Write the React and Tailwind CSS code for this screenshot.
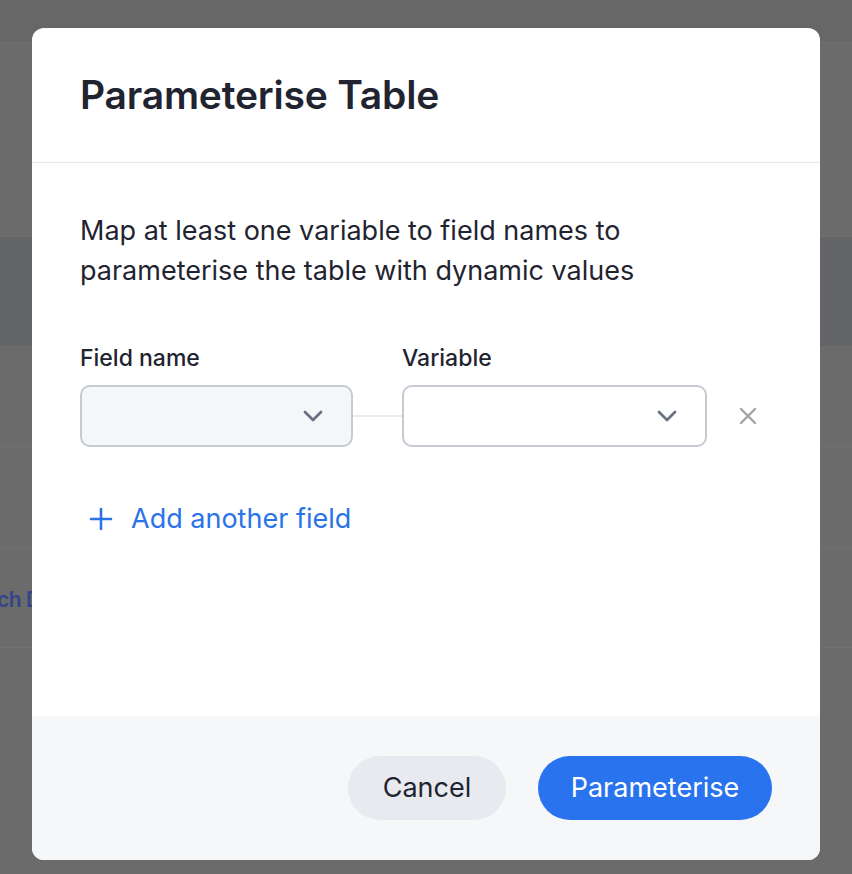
import React from "react";

function Chevron() {
  return (
    <svg width="20" height="12" viewBox="0 0 20 12" fill="none">
      <path d="M2 2l8 8 8-8" stroke="#6b7280" strokeWidth="2.8" strokeLinecap="round" strokeLinejoin="round" />
    </svg>
  );
}

function CloseIcon() {
  return (
    <svg width="18" height="18" viewBox="0 0 18 18" fill="none">
      <path d="M2 2l14 14M16 2L2 16" stroke="#a0a3a8" strokeWidth="2.4" strokeLinecap="round" />
    </svg>
  );
}

function PlusIcon() {
  return (
    <svg width="24" height="24" viewBox="0 0 24 24" fill="none">
      <path d="M12 2v20M2 12h20" stroke="#2a73e8" strokeWidth="2.6" strokeLinecap="round" />
    </svg>
  );
}

export default function App() {
  return (
    <div
      className="relative w-[852px] h-[874px] overflow-hidden bg-[#6b6b6b]"
      style={{ fontFamily: "Inter, 'Noto Sans', sans-serif" }}
    >
      {/* page underneath the overlay */}
      <div className="flex flex-col">
        <div className="h-[43px] bg-[#676768] border-b border-[#717171]" />
        <div className="h-[193px]" />
        <div className="h-[111px] bg-[#646569] border-y border-[#6e6e6f]" />
        <div className="h-[100px] border-b border-[#717171]" />
        <div className="h-[101px] border-b border-[#717171]" />
        <div className="h-[100px] border-b border-[#717171] flex items-center pt-[4px]">
          <span className="ml-[-3px] text-[21px] font-semibold tracking-[-0.5px] text-[#33448a] whitespace-nowrap">
            ch Dashboards
          </span>
        </div>
      </div>

      {/* modal */}
      <div className="absolute inset-0 pl-[32px] pt-[28px]">
        <div className="w-[788px] h-[832px] bg-white rounded-xl overflow-hidden flex flex-col text-[#1f2430]">
          <div className="h-[135px] shrink-0 border-b border-[#e5e8ec] px-12 flex items-center">
            <h2 className="text-[39px] font-semibold tracking-[-0.2px]">Parameterise Table</h2>
          </div>

          <div className="flex-1 px-12 pt-[48px]">
            <p className="text-[27px] leading-[40px] w-[620px]">
              Map at least one variable to field names to parameterise the table with dynamic values
            </p>

            <div className="mt-[53px] flex items-end">
              <div className="flex flex-col w-[273px]">
                <label className="text-[23px] font-medium leading-[28px] mb-[13px]">Field name</label>
                <div className="h-[62px] rounded-[10px] border-2 border-[#c6cad2] bg-[#f5f6f8] flex items-center justify-end pr-[28px]">
                  <Chevron />
                </div>
              </div>
              <div className="w-[49px] h-[62px] flex items-center">
                <div className="w-full h-[2px] bg-[#e8eaee]" />
              </div>
              <div className="flex flex-col w-[305px]">
                <label className="text-[23px] font-medium leading-[28px] mb-[13px]">Variable</label>
                <div className="h-[62px] rounded-[10px] border-2 border-[#c6cad2] bg-white flex items-center justify-end pr-[28px]">
                  <Chevron />
                </div>
              </div>
              <div className="h-[62px] flex items-center pl-[32px]">
                <CloseIcon />
              </div>
            </div>

            <button className="mt-[56px] flex items-center gap-[18px] pl-[9px] text-[27px] leading-[32px] text-[#2a73e8]">
              <PlusIcon />
              <span>Add another field</span>
            </button>
          </div>

          <div className="h-[144px] shrink-0 bg-[#f6f7f9] flex items-center justify-end gap-8 pr-12">
            <button className="h-[64px] w-[158px] rounded-full bg-[#e8eaef] text-[27px] text-[#1f2430]">
              Cancel
            </button>
            <button className="h-[64px] w-[234px] rounded-full bg-[#2a73ee] text-[27px] text-white">
              Parameterise
            </button>
          </div>
        </div>
      </div>
    </div>
  );
}
